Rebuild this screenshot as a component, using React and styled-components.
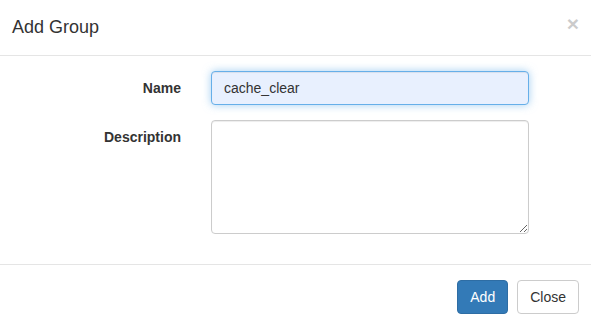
import React from 'react';
import styled, { createGlobalStyle } from 'styled-components';

const GlobalStyle = createGlobalStyle`
  html, body {
    margin: 0;
    padding: 0;
    background: #fff;
  }
  body {
    font-family: "Liberation Sans", Arial, sans-serif;
    font-size: 14px;
    line-height: 1.42857143;
    color: #333;
  }
  * {
    box-sizing: border-box;
  }
`;

const Modal = styled.div`
  width: 591px;
  background: #fff;
`;

const Header = styled.div`
  display: flex;
  align-items: flex-start;
  justify-content: space-between;
  padding: 15px 12px 14px 12px;
  border-bottom: 1px solid #e5e5e5;
`;

const Title = styled.h4`
  margin: 0;
  font-size: 18px;
  font-weight: 500;
  line-height: 1.42857143;
  color: #333;
`;

const CloseX = styled.button`
  padding: 0;
  margin-top: -2px;
  background: transparent;
  border: 0;
  cursor: pointer;
  font-family: "Liberation Sans", Arial, sans-serif;
  font-size: 21px;
  font-weight: bold;
  line-height: 1;
  color: #000;
  opacity: 0.2;
`;

const Body = styled.div`
  padding: 15px 12px;
`;

const FormGroup = styled.div`
  display: grid;
  grid-template-columns: 169px 318px;
  column-gap: 30px;
  align-items: start;
  margin-bottom: 15px;
`;

const Label = styled.label`
  text-align: right;
  padding-top: 7px;
  font-weight: bold;
  color: #333;
`;

const Input = styled.input`
  display: block;
  width: 100%;
  height: 34px;
  padding: 6px 12px;
  font-family: "Liberation Sans", Arial, sans-serif;
  font-size: 14px;
  color: #333;
  background: #e8f0fe;
  border: 1px solid #66afe9;
  border-radius: 4px;
  outline: 0;
  box-shadow: inset 0 1px 1px rgba(0, 0, 0, 0.075), 0 0 8px rgba(102, 175, 233, 0.6);
`;

const TextArea = styled.textarea`
  display: block;
  width: 100%;
  height: 114px;
  padding: 6px 12px;
  font-family: "Liberation Sans", Arial, sans-serif;
  font-size: 14px;
  color: #555;
  background: #fff;
  border: 1px solid #ccc;
  border-radius: 4px;
  box-shadow: inset 0 1px 1px rgba(0, 0, 0, 0.075);
  outline: 0;
  resize: vertical;
`;

const Footer = styled.div`
  display: flex;
  justify-content: flex-end;
  gap: 9px;
  padding: 15px 12px;
  border-top: 1px solid #e5e5e5;
`;

const Button = styled.button`
  height: 34px;
  padding: 6px 12px;
  font-family: "Liberation Sans", Arial, sans-serif;
  font-size: 14px;
  line-height: 1.42857143;
  border-radius: 4px;
  cursor: pointer;
  color: ${p => (p.$primary ? '#fff' : '#333')};
  background: ${p => (p.$primary ? '#337ab7' : '#fff')};
  border: 1px solid ${p => (p.$primary ? '#2e6da4' : '#ccc')};
`;

export default function App() {
  return (
    <>
      <GlobalStyle />
      <Modal>
        <Header>
          <Title>Add Group</Title>
          <CloseX type="button" aria-label="Close">×</CloseX>
        </Header>
        <Body>
          <FormGroup>
            <Label htmlFor="name">Name</Label>
            <Input id="name" defaultValue="cache_clear" />
          </FormGroup>
          <FormGroup>
            <Label htmlFor="desc">Description</Label>
            <TextArea id="desc" />
          </FormGroup>
        </Body>
        <Footer>
          <Button $primary type="button">Add</Button>
          <Button type="button">Close</Button>
        </Footer>
      </Modal>
    </>
  );
}
